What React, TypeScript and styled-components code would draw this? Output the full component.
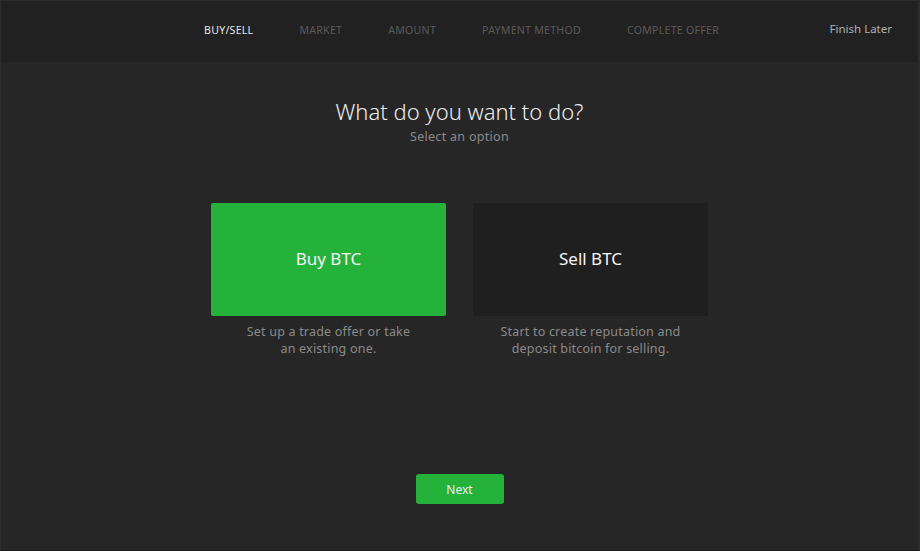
import React, { useState } from 'react'
import styled, { createGlobalStyle } from 'styled-components'

const GlobalStyle = createGlobalStyle`
  html, body {
    margin: 0;
    padding: 0;
    background: #262626;
  }
  body {
    font-family: 'Noto Sans', 'Open Sans', sans-serif;
    -webkit-font-smoothing: antialiased;
  }
`

const steps = ['Buy/Sell', 'Market', 'Amount', 'Payment Method', 'Complete Offer']

const options = [
  { id: 'buy', label: 'Buy BTC', text: ['Set up a trade offer or take', 'an existing one.'] },
  { id: 'sell', label: 'Sell BTC', text: ['Start to create reputation and', 'deposit bitcoin for selling.'] }
]

export default function App() {
  const [picked, setPicked] = useState('buy')

  return (
    <>
      <GlobalStyle />
      <Page>
        <Header>
          <Steps>
            {steps.map((s, i) => (
              <Step key={s} active={i === 0}>{s}</Step>
            ))}
          </Steps>
          <Later>Finish Later</Later>
        </Header>
        <Main>
          <Title>What do you want to do?</Title>
          <Sub>Select an option</Sub>
          <Options>
            {options.map(o => (
              <Option key={o.id}>
                <Card selected={picked === o.id} onClick={() => setPicked(o.id)}>
                  {o.label}
                </Card>
                <Desc>
                  {o.text[0]}
                  <br />
                  {o.text[1]}
                </Desc>
              </Option>
            ))}
          </Options>
          <Next>Next</Next>
        </Main>
      </Page>
    </>
  )
}

const Page = styled.div`
  width: 920px;
  height: 551px;
  box-sizing: border-box;
  border: 1px solid #2c2c2c;
  border-right-width: 2px;
  border-bottom-color: #1c1c1c;
  display: flex;
  flex-direction: column;
  background: #262626;
`
const Header = styled.div`
  height: 61px;
  box-sizing: border-box;
  padding: 0 26px 3px 203px;
  background: #212121;
  display: flex;
  align-items: center;
`
const Steps = styled.div`
  display: flex;
  gap: 46px;
  flex: 1;
`
const Step = styled.div<{ active?: boolean }>`
  font-size: 10.6px;
  line-height: 16px;
  text-transform: uppercase;
  letter-spacing: 0.25px;
  color: ${p => (p.active ? '#e6e6e6' : '#5a5a5a')};
`
const Later = styled.div`
  font-size: 11.5px;
  line-height: 16px;
  margin-top: -2px;
  color: #b0b0b0;
`
const Main = styled.div`
  flex: 1;
  display: flex;
  flex-direction: column;
  align-items: center;
  padding-top: 34px;
`
const Title = styled.h1`
  margin: 0;
  font-size: 22px;
  font-weight: 300;
  color: #ececec;
  line-height: 30px;
`
const Sub = styled.div`
  margin-top: 2px;
  font-size: 12.5px;
  color: #8a8a8a;
  letter-spacing: 0.3px;
`
const Options = styled.div`
  display: flex;
  gap: 27px;
  margin-top: 58px;
`
const Option = styled.div`
  width: 235px;
  display: flex;
  flex-direction: column;
  align-items: center;
`
const Card = styled.div<{ selected?: boolean }>`
  width: 100%;
  height: 113px;
  padding-bottom: 2px;
  box-sizing: border-box;
  border-radius: 2px;
  background: ${p => (p.selected ? '#25b23b' : '#1f1f1f')};
  color: #f5f5f5;
  font-size: 17px;
  display: flex;
  align-items: center;
  justify-content: center;
  cursor: pointer;
`
const Desc = styled.div`
  margin-top: 7px;
  font-size: 12.5px;
  line-height: 17px;
  color: #8a8a8a;
  text-align: center;
  letter-spacing: 0.2px;
`
const Next = styled.button`
  margin-top: 117px;
  width: 88px;
  height: 30px;
  border: none;
  border-radius: 3px;
  background: #25b23b;
  color: #f0f0f0;
  font-family: inherit;
  font-size: 12px;
  cursor: pointer;
`
